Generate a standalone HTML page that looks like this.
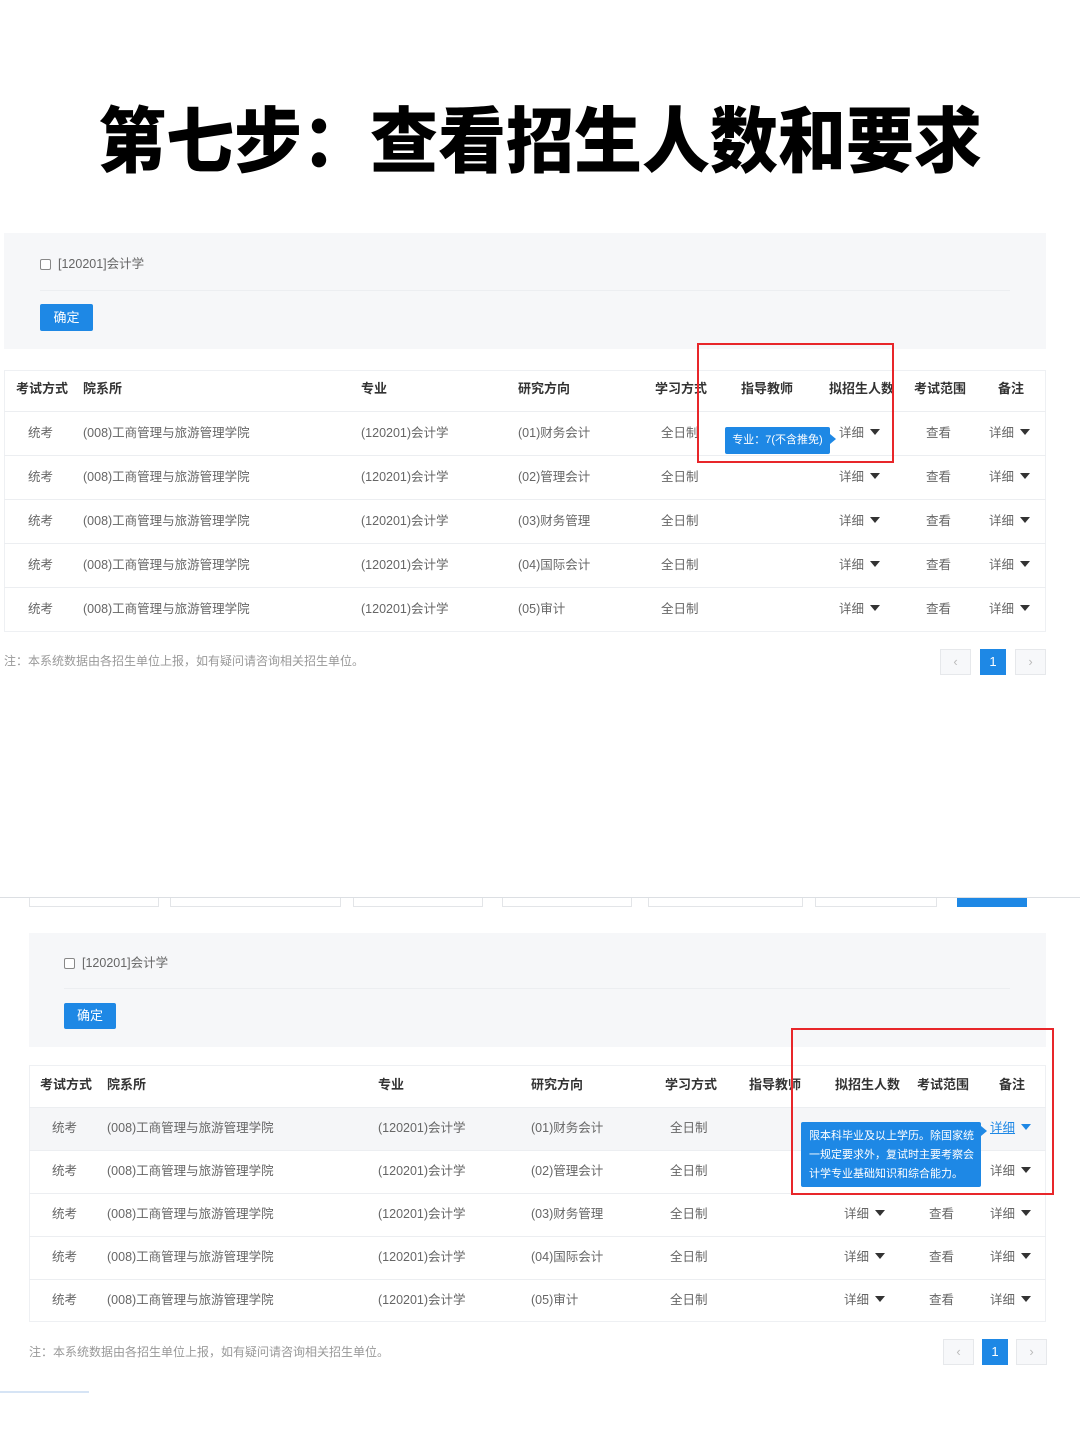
<!DOCTYPE html>
<html><head><meta charset="utf-8"><style>
*{margin:0;padding:0;box-sizing:border-box}
body{width:1080px;height:1439px;background:#fff;position:relative;overflow:hidden;font-family:"Liberation Sans","Noto Sans CJK SC",sans-serif;color:#666;font-size:12.5px;line-height:1.15}
.a{position:absolute;white-space:nowrap}
.title{left:0;width:1080px;top:102px;text-align:center;font-size:68px;line-height:1;font-weight:900;color:#000;transform:scaleY(1.05);letter-spacing:0px;font-family:"Noto Sans CJK SC",sans-serif}
.panel{background:#f6f7f9}
.cb{width:11px;height:11px;border:1px solid #888;border-radius:2px;background:#fff}
.btn{background:#1e88e5;color:#fff;font-size:13px;text-align:center;border-radius:2px}
.tbl{border:1px solid #eef0f3;background:#fff}
.hd{font-weight:bold;color:#333;font-size:13px}
.line{height:1px;background:#eceef1}
.tri{display:inline-block;width:0;height:0;border-left:5px solid transparent;border-right:5px solid transparent;border-top:6px solid #333;margin-left:6px;vertical-align:2px}
.red{border:2.5px solid #e8262a}
.tip{background:#1e88e5;color:#fff;border-radius:2px;font-size:11px}
.pg{width:31px;height:26px;border:1px solid #e6e8eb;background:#f7f8fa;color:#bbb;text-align:center;line-height:24px;font-size:13px}
.pga{background:#1e88e5;color:#fff;border-color:#1e88e5;width:26px}
.note{color:#999;font-size:12px}
</style></head><body>
<div class="a title">第七步：查看招生人数和要求</div>

<!-- SECTION 1 -->
<div class="a panel" style="left:4px;top:233px;width:1042px;height:116px"></div>
<div class="a cb" style="left:40px;top:259px"></div>
<div class="a" style="left:58px;top:257px">[120201]会计学</div>
<div class="a line" style="left:40px;top:290px;width:970px"></div>
<div class="a btn" style="left:40px;top:304px;width:53px;height:27px;line-height:27px">确定</div>

<div class="a tbl" style="left:4px;top:370px;width:1042px;height:262px"></div>
<div class="a hd" style="left:16px;top:382px">考试方式</div>
<div class="a hd" style="left:83px;top:382px">院系所</div>
<div class="a hd" style="left:361px;top:382px">专业</div>
<div class="a hd" style="left:518px;top:382px">研究方向</div>
<div class="a hd" style="left:655px;top:382px">学习方式</div>
<div class="a hd" style="left:741px;top:382px">指导教师</div>
<div class="a hd" style="left:829px;top:382px">拟招生人数</div>
<div class="a hd" style="left:914px;top:382px">考试范围</div>
<div class="a hd" style="left:998px;top:382px">备注</div>

<div class="a line" style="left:4px;top:411px;width:1042px"></div>
<div class="a line" style="left:4px;top:455px;width:1042px"></div>
<div class="a line" style="left:4px;top:499px;width:1042px"></div>
<div class="a line" style="left:4px;top:543px;width:1042px"></div>
<div class="a line" style="left:4px;top:587px;width:1042px"></div>

<div class="a" style="left:28px;top:426px">统考</div><div class="a" style="left:83px;top:426px">(008)工商管理与旅游管理学院</div><div class="a" style="left:361px;top:426px">(120201)会计学</div><div class="a" style="left:518px;top:426px">(01)财务会计</div><div class="a" style="left:661px;top:426px">全日制</div><div class="a" style="left:839px;top:426px">详细<span class="tri"></span></div><div class="a" style="left:926px;top:426px">查看</div><div class="a" style="left:989px;top:426px">详细<span class="tri"></span></div>
<div class="a" style="left:28px;top:470px">统考</div><div class="a" style="left:83px;top:470px">(008)工商管理与旅游管理学院</div><div class="a" style="left:361px;top:470px">(120201)会计学</div><div class="a" style="left:518px;top:470px">(02)管理会计</div><div class="a" style="left:661px;top:470px">全日制</div><div class="a" style="left:839px;top:470px">详细<span class="tri"></span></div><div class="a" style="left:926px;top:470px">查看</div><div class="a" style="left:989px;top:470px">详细<span class="tri"></span></div>
<div class="a" style="left:28px;top:514px">统考</div><div class="a" style="left:83px;top:514px">(008)工商管理与旅游管理学院</div><div class="a" style="left:361px;top:514px">(120201)会计学</div><div class="a" style="left:518px;top:514px">(03)财务管理</div><div class="a" style="left:661px;top:514px">全日制</div><div class="a" style="left:839px;top:514px">详细<span class="tri"></span></div><div class="a" style="left:926px;top:514px">查看</div><div class="a" style="left:989px;top:514px">详细<span class="tri"></span></div>
<div class="a" style="left:28px;top:558px">统考</div><div class="a" style="left:83px;top:558px">(008)工商管理与旅游管理学院</div><div class="a" style="left:361px;top:558px">(120201)会计学</div><div class="a" style="left:518px;top:558px">(04)国际会计</div><div class="a" style="left:661px;top:558px">全日制</div><div class="a" style="left:839px;top:558px">详细<span class="tri"></span></div><div class="a" style="left:926px;top:558px">查看</div><div class="a" style="left:989px;top:558px">详细<span class="tri"></span></div>
<div class="a" style="left:28px;top:602px">统考</div><div class="a" style="left:83px;top:602px">(008)工商管理与旅游管理学院</div><div class="a" style="left:361px;top:602px">(120201)会计学</div><div class="a" style="left:518px;top:602px">(05)审计</div><div class="a" style="left:661px;top:602px">全日制</div><div class="a" style="left:839px;top:602px">详细<span class="tri"></span></div><div class="a" style="left:926px;top:602px">查看</div><div class="a" style="left:989px;top:602px">详细<span class="tri"></span></div>

<div class="a tip" style="left:725px;top:427px;width:105px;height:27px;line-height:27px;text-align:center">专业：7(不含推免)</div>
<div class="a" style="left:830px;top:434px;width:0;height:0;border-top:5px solid transparent;border-bottom:5px solid transparent;border-left:6px solid #1e88e5"></div>
<div class="a red" style="left:697px;top:343px;width:197px;height:120px"></div>

<div class="a note" style="left:4px;top:655px">注：本系统数据由各招生单位上报，如有疑问请咨询相关招生单位。</div>
<div class="a pg" style="left:940px;top:649px">&lsaquo;</div>
<div class="a pg pga" style="left:980px;top:649px">1</div>
<div class="a pg" style="left:1015px;top:649px">&rsaquo;</div>

<!-- SECTION 2 -->
<div class="a" style="left:0;top:897px;width:1080px;height:1px;background:#dcdfe3"></div>
<div class="a" style="left:29px;top:898px;width:130px;height:9px;border:1px solid #e3e5e8;border-top:none"></div>
<div class="a" style="left:170px;top:898px;width:171px;height:9px;border:1px solid #e3e5e8;border-top:none"></div>
<div class="a" style="left:353px;top:898px;width:130px;height:9px;border:1px solid #e3e5e8;border-top:none"></div>
<div class="a" style="left:502px;top:898px;width:130px;height:9px;border:1px solid #e3e5e8;border-top:none"></div>
<div class="a" style="left:648px;top:898px;width:155px;height:9px;border:1px solid #e3e5e8;border-top:none"></div>
<div class="a" style="left:815px;top:898px;width:122px;height:9px;border:1px solid #e3e5e8;border-top:none"></div>
<div class="a" style="left:957px;top:898px;width:70px;height:9px;background:#1e88e5"></div>

<div class="a panel" style="left:29px;top:933px;width:1017px;height:114px"></div>
<div class="a cb" style="left:64px;top:958px"></div>
<div class="a" style="left:82px;top:956px">[120201]会计学</div>
<div class="a line" style="left:64px;top:988px;width:946px"></div>
<div class="a btn" style="left:64px;top:1003px;width:52px;height:26px;line-height:26px">确定</div>

<div class="a tbl" style="left:29px;top:1065px;width:1017px;height:257px"></div>
<div class="a" style="left:30px;top:1107px;width:1015px;height:43px;background:#f5f6f8"></div>
<div class="a hd" style="left:40px;top:1078px">考试方式</div>
<div class="a hd" style="left:107px;top:1078px">院系所</div>
<div class="a hd" style="left:378px;top:1078px">专业</div>
<div class="a hd" style="left:531px;top:1078px">研究方向</div>
<div class="a hd" style="left:665px;top:1078px">学习方式</div>
<div class="a hd" style="left:749px;top:1078px">指导教师</div>
<div class="a hd" style="left:835px;top:1078px">拟招生人数</div>
<div class="a hd" style="left:917px;top:1078px">考试范围</div>
<div class="a hd" style="left:999px;top:1078px">备注</div>

<div class="a line" style="left:29px;top:1107px;width:1017px"></div>
<div class="a line" style="left:29px;top:1150px;width:1017px"></div>
<div class="a line" style="left:29px;top:1193px;width:1017px"></div>
<div class="a line" style="left:29px;top:1236px;width:1017px"></div>
<div class="a line" style="left:29px;top:1279px;width:1017px"></div>

<div class="a" style="left:52px;top:1121px">统考</div><div class="a" style="left:107px;top:1121px">(008)工商管理与旅游管理学院</div><div class="a" style="left:378px;top:1121px">(120201)会计学</div><div class="a" style="left:531px;top:1121px">(01)财务会计</div><div class="a" style="left:670px;top:1121px">全日制</div><div class="a" style="left:990px;top:1121px;color:#1e88e5;text-decoration:underline">详细<span class="tri" style="border-top-color:#1e88e5"></span></div>
<div class="a" style="left:52px;top:1164px">统考</div><div class="a" style="left:107px;top:1164px">(008)工商管理与旅游管理学院</div><div class="a" style="left:378px;top:1164px">(120201)会计学</div><div class="a" style="left:531px;top:1164px">(02)管理会计</div><div class="a" style="left:670px;top:1164px">全日制</div><div class="a" style="left:990px;top:1164px">详细<span class="tri"></span></div>
<div class="a" style="left:52px;top:1207px">统考</div><div class="a" style="left:107px;top:1207px">(008)工商管理与旅游管理学院</div><div class="a" style="left:378px;top:1207px">(120201)会计学</div><div class="a" style="left:531px;top:1207px">(03)财务管理</div><div class="a" style="left:670px;top:1207px">全日制</div><div class="a" style="left:844px;top:1207px">详细<span class="tri"></span></div><div class="a" style="left:929px;top:1207px">查看</div><div class="a" style="left:990px;top:1207px">详细<span class="tri"></span></div>
<div class="a" style="left:52px;top:1250px">统考</div><div class="a" style="left:107px;top:1250px">(008)工商管理与旅游管理学院</div><div class="a" style="left:378px;top:1250px">(120201)会计学</div><div class="a" style="left:531px;top:1250px">(04)国际会计</div><div class="a" style="left:670px;top:1250px">全日制</div><div class="a" style="left:844px;top:1250px">详细<span class="tri"></span></div><div class="a" style="left:929px;top:1250px">查看</div><div class="a" style="left:990px;top:1250px">详细<span class="tri"></span></div>
<div class="a" style="left:52px;top:1293px">统考</div><div class="a" style="left:107px;top:1293px">(008)工商管理与旅游管理学院</div><div class="a" style="left:378px;top:1293px">(120201)会计学</div><div class="a" style="left:531px;top:1293px">(05)审计</div><div class="a" style="left:670px;top:1293px">全日制</div><div class="a" style="left:844px;top:1293px">详细<span class="tri"></span></div><div class="a" style="left:929px;top:1293px">查看</div><div class="a" style="left:990px;top:1293px">详细<span class="tri"></span></div>

<div class="a tip" style="left:801px;top:1122px;width:180px;height:65px;padding:5px 0 0 8px;line-height:19px;white-space:normal">限本科毕业及以上学历。除国家统一规定要求外，复试时主要考察会计学专业基础知识和综合能力。</div>
<div class="a" style="left:981px;top:1126px;width:0;height:0;border-top:5px solid transparent;border-bottom:5px solid transparent;border-left:6px solid #1e88e5"></div>
<div class="a red" style="left:791px;top:1028px;width:263px;height:167px"></div>

<div class="a note" style="left:29px;top:1346px">注：本系统数据由各招生单位上报，如有疑问请咨询相关招生单位。</div>
<div class="a pg" style="left:943px;top:1339px">&lsaquo;</div>
<div class="a pg pga" style="left:982px;top:1339px">1</div>
<div class="a pg" style="left:1016px;top:1339px">&rsaquo;</div>
<div class="a" style="left:0;top:1391px;width:89px;height:2px;background:#d6e4f5"></div>
</body></html>
